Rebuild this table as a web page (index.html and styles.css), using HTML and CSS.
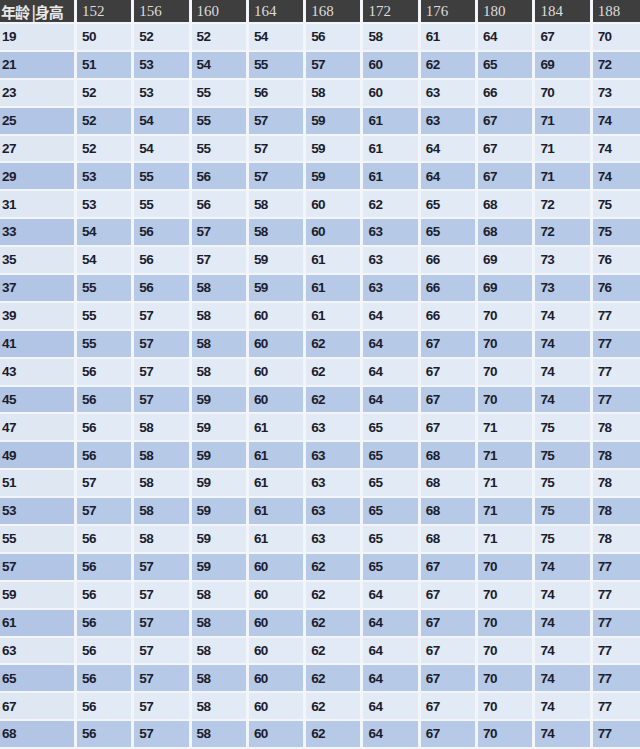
FILE: index.html
```html
<!DOCTYPE html>
<html lang="zh-CN">
<head>
<meta charset="utf-8">
<title>身高体重对照表</title>
<link rel="stylesheet" href="styles.css">
</head>
<body>
<table class="chart">
<colgroup>
<col class="c-age">
<col class="c-h"><col class="c-h"><col class="c-h"><col class="c-h"><col class="c-h">
<col class="c-h"><col class="c-h"><col class="c-h"><col class="c-h"><col class="c-h">
</colgroup>
<thead>
<tr class="head"><th class="age-head">年龄 |身高</th><th>152</th><th>156</th><th>160</th><th>164</th><th>168</th><th>172</th><th>176</th><th>180</th><th>184</th><th>188</th></tr>
</thead>
<tbody>
<tr class="light"><td>19</td><td>50</td><td>52</td><td>52</td><td>54</td><td>56</td><td>58</td><td>61</td><td>64</td><td>67</td><td>70</td></tr>
<tr class="blue"><td>21</td><td>51</td><td>53</td><td>54</td><td>55</td><td>57</td><td>60</td><td>62</td><td>65</td><td>69</td><td>72</td></tr>
<tr class="light"><td>23</td><td>52</td><td>53</td><td>55</td><td>56</td><td>58</td><td>60</td><td>63</td><td>66</td><td>70</td><td>73</td></tr>
<tr class="blue"><td>25</td><td>52</td><td>54</td><td>55</td><td>57</td><td>59</td><td>61</td><td>63</td><td>67</td><td>71</td><td>74</td></tr>
<tr class="light"><td>27</td><td>52</td><td>54</td><td>55</td><td>57</td><td>59</td><td>61</td><td>64</td><td>67</td><td>71</td><td>74</td></tr>
<tr class="blue"><td>29</td><td>53</td><td>55</td><td>56</td><td>57</td><td>59</td><td>61</td><td>64</td><td>67</td><td>71</td><td>74</td></tr>
<tr class="light"><td>31</td><td>53</td><td>55</td><td>56</td><td>58</td><td>60</td><td>62</td><td>65</td><td>68</td><td>72</td><td>75</td></tr>
<tr class="blue"><td>33</td><td>54</td><td>56</td><td>57</td><td>58</td><td>60</td><td>63</td><td>65</td><td>68</td><td>72</td><td>75</td></tr>
<tr class="light"><td>35</td><td>54</td><td>56</td><td>57</td><td>59</td><td>61</td><td>63</td><td>66</td><td>69</td><td>73</td><td>76</td></tr>
<tr class="blue"><td>37</td><td>55</td><td>56</td><td>58</td><td>59</td><td>61</td><td>63</td><td>66</td><td>69</td><td>73</td><td>76</td></tr>
<tr class="light"><td>39</td><td>55</td><td>57</td><td>58</td><td>60</td><td>61</td><td>64</td><td>66</td><td>70</td><td>74</td><td>77</td></tr>
<tr class="blue"><td>41</td><td>55</td><td>57</td><td>58</td><td>60</td><td>62</td><td>64</td><td>67</td><td>70</td><td>74</td><td>77</td></tr>
<tr class="light"><td>43</td><td>56</td><td>57</td><td>58</td><td>60</td><td>62</td><td>64</td><td>67</td><td>70</td><td>74</td><td>77</td></tr>
<tr class="blue"><td>45</td><td>56</td><td>57</td><td>59</td><td>60</td><td>62</td><td>64</td><td>67</td><td>70</td><td>74</td><td>77</td></tr>
<tr class="light"><td>47</td><td>56</td><td>58</td><td>59</td><td>61</td><td>63</td><td>65</td><td>67</td><td>71</td><td>75</td><td>78</td></tr>
<tr class="blue"><td>49</td><td>56</td><td>58</td><td>59</td><td>61</td><td>63</td><td>65</td><td>68</td><td>71</td><td>75</td><td>78</td></tr>
<tr class="light"><td>51</td><td>57</td><td>58</td><td>59</td><td>61</td><td>63</td><td>65</td><td>68</td><td>71</td><td>75</td><td>78</td></tr>
<tr class="blue"><td>53</td><td>57</td><td>58</td><td>59</td><td>61</td><td>63</td><td>65</td><td>68</td><td>71</td><td>75</td><td>78</td></tr>
<tr class="light"><td>55</td><td>56</td><td>58</td><td>59</td><td>61</td><td>63</td><td>65</td><td>68</td><td>71</td><td>75</td><td>78</td></tr>
<tr class="blue"><td>57</td><td>56</td><td>57</td><td>59</td><td>60</td><td>62</td><td>65</td><td>67</td><td>70</td><td>74</td><td>77</td></tr>
<tr class="light"><td>59</td><td>56</td><td>57</td><td>58</td><td>60</td><td>62</td><td>64</td><td>67</td><td>70</td><td>74</td><td>77</td></tr>
<tr class="blue"><td>61</td><td>56</td><td>57</td><td>58</td><td>60</td><td>62</td><td>64</td><td>67</td><td>70</td><td>74</td><td>77</td></tr>
<tr class="light"><td>63</td><td>56</td><td>57</td><td>58</td><td>60</td><td>62</td><td>64</td><td>67</td><td>70</td><td>74</td><td>77</td></tr>
<tr class="blue"><td>65</td><td>56</td><td>57</td><td>58</td><td>60</td><td>62</td><td>64</td><td>67</td><td>70</td><td>74</td><td>77</td></tr>
<tr class="light"><td>67</td><td>56</td><td>57</td><td>58</td><td>60</td><td>62</td><td>64</td><td>67</td><td>70</td><td>74</td><td>77</td></tr>
<tr class="blue"><td>68</td><td>56</td><td>57</td><td>58</td><td>60</td><td>62</td><td>64</td><td>67</td><td>70</td><td>74</td><td>77</td></tr>
<tr class="foot"><td></td><td></td><td></td><td></td><td></td><td></td><td></td><td></td><td></td><td></td><td></td></tr>
</tbody>
</table>
</body>
</html>
```
FILE: styles.css
```css
html, body {
  margin: 0;
  padding: 0;
  height: 749px;
  overflow: hidden;
  background: #f2f5fa;
}

.chart {
  border-collapse: separate;
  border-spacing: 3px 2px;
  margin: -2px 0 0 -3px;
  table-layout: fixed;
  width: 653px;
  font-family: "Liberation Sans", "DejaVu Sans", sans-serif;
}

.c-age { width: 74px; }
.c-h { width: 54.3px; }

.head th {
  height: 22px;
  padding: 0 0 0 5px;
  background: #3e3e3e;
  color: #dcdcdc;
  font-family: "Liberation Serif", "DejaVu Serif", serif;
  font-weight: normal;
  font-size: 15px;
  text-align: left;
  vertical-align: middle;
  line-height: 1;
}

.head .age-head {
  padding-left: 1px;
  font-family: "Noto Sans CJK SC", sans-serif;
  font-weight: bold;
  font-size: 15px;
  color: #e8e8e8;
  letter-spacing: -1px;
  white-space: nowrap;
}

td {
  height: 25.9px;
  padding: 0 0 0 5px;
  font-size: 13.5px;
  font-weight: bold;
  letter-spacing: -0.6px;
  color: #1c1d2c;
  text-align: left;
  vertical-align: middle;
  line-height: 1;
}

tbody td:first-child {
  padding-left: 2px;
}

.light td { background: #e2eaf6; }
.blue td { background: #b6c9e7; }

.light td:first-child { background: #dfe7f3; }
.blue td:first-child { background: #b2c5e4; }

.foot td {
  height: 20px;
  background: #3e3e3e;
}
```
